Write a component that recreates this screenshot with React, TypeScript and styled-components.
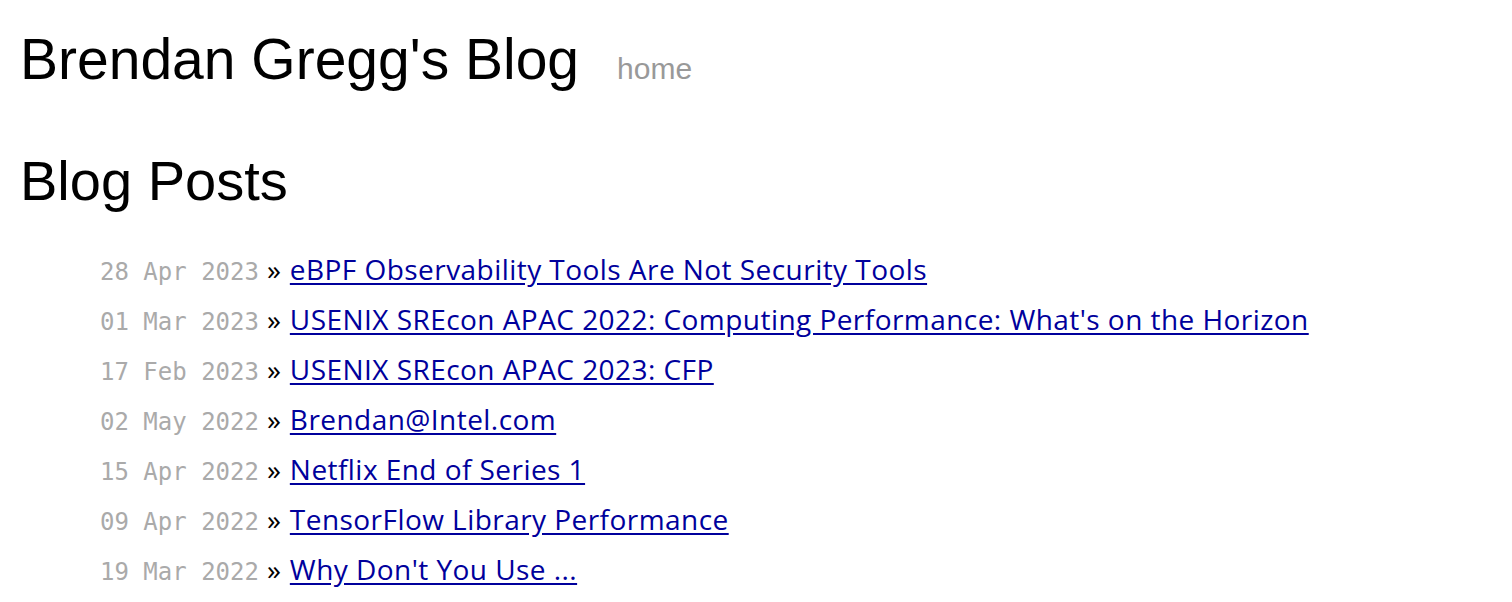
import styled, { createGlobalStyle } from 'styled-components';

const GlobalStyle = createGlobalStyle`
  body {
    margin: 0;
    background: #fff;
    font-family: "Liberation Sans", Arial, sans-serif;
  }
`;

const Page = styled.div`
  padding: 0 20px;
`;

const Header = styled.header`
  display: flex;
  align-items: baseline;
  gap: 38px;
  padding-top: 27px;
`;

const SiteTitle = styled.div`
  font-size: 57px;
  line-height: 1.15;
  color: #000;
`;

const NavLink = styled.a`
  font-size: 30px;
  color: #999;
  text-decoration: none;
`;

const Heading = styled.h1`
  font-size: 56px;
  font-weight: normal;
  line-height: 1.15;
  margin: 56px 0 0;
`;

const PostList = styled.ul`
  list-style: none;
  margin: 37px 0 0;
  padding: 0 0 0 80px;
`;

const Post = styled.li`
  display: flex;
  align-items: baseline;
  height: 50px;
  font-family: "Open Sans", Lato, sans-serif;
  font-size: 28px;
`;

const PostDate = styled.span`
  font-family: "DejaVu Sans Mono", monospace;
  font-size: 24px;
  color: #aaa;
  margin-right: 8px;
`;

const Arrow = styled.span`
  color: #000;
  margin-right: 9px;
`;

const PostLink = styled.a`
  color: #00009c;
  letter-spacing: 0.45px;
  text-decoration: underline;
  text-underline-offset: 3px;
`;

const posts = [
  { date: '28 Apr 2023', title: 'eBPF Observability Tools Are Not Security Tools' },
  { date: '01 Mar 2023', title: "USENIX SREcon APAC 2022: Computing Performance: What's on the Horizon" },
  { date: '17 Feb 2023', title: 'USENIX SREcon APAC 2023: CFP' },
  { date: '02 May 2022', title: 'Brendan@Intel.com' },
  { date: '15 Apr 2022', title: 'Netflix End of Series 1' },
  { date: '09 Apr 2022', title: 'TensorFlow Library Performance' },
  { date: '19 Mar 2022', title: "Why Don't You Use ..." },
];

export default function App() {
  return (
    <>
      <GlobalStyle />
      <Page>
        <Header>
          <SiteTitle>Brendan Gregg's Blog</SiteTitle>
          <NavLink href="#">home</NavLink>
        </Header>
        <Heading>Blog Posts</Heading>
        <PostList>
          {posts.map((p) => (
            <Post key={p.date + p.title}>
              <PostDate>{p.date}</PostDate>
              <Arrow>»</Arrow>
              <PostLink href="#">{p.title}</PostLink>
            </Post>
          ))}
        </PostList>
      </Page>
    </>
  );
}
